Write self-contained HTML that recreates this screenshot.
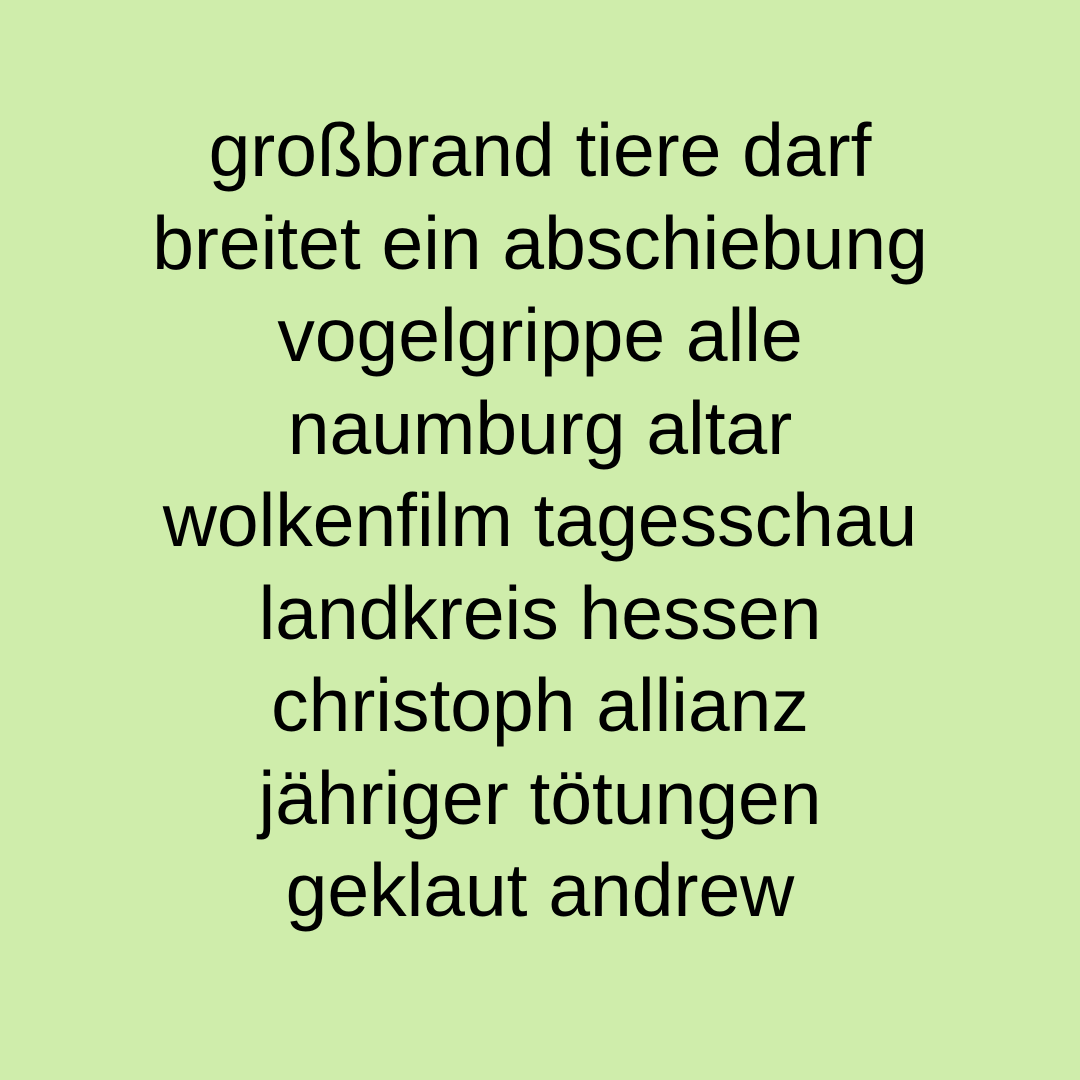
<!DOCTYPE html>
<html>
<head>
<meta charset="utf-8">
<style>
  html, body {
    margin: 0;
    padding: 0;
  }
  body {
    width: 1080px;
    height: 1080px;
    background: #cfedab;
    overflow: hidden;
  }
  .t {
    position: absolute;
    top: 104px;
    left: 0;
    width: 1080px;
    text-align: center;
    font-family: "Liberation Sans", sans-serif;
    font-size: 75px;
    line-height: 92.5px;
    color: #000;
  }
</style>
</head>
<body>
<div class="t">
großbrand tiere darf<br>
breitet ein abschiebung<br>
vogelgrippe alle<br>
naumburg altar<br>
wolkenfilm tagesschau<br>
landkreis hessen<br>
christoph allianz<br>
jähriger tötungen<br>
geklaut andrew
</div>
</body>
</html>
